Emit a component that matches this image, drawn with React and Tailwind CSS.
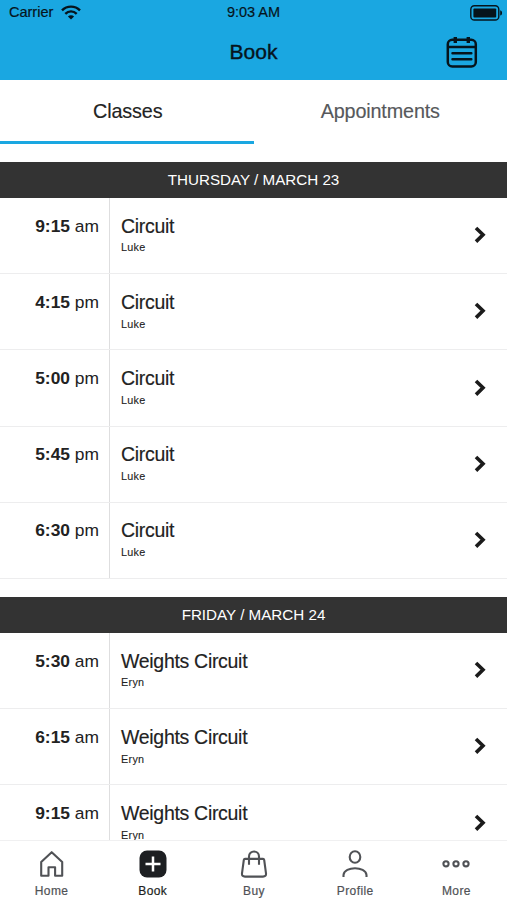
import React from 'react';

const days = [
    {
        label: 'THURSDAY / MARCH 23',
        classes: [
            { time: '9:15', period: 'am', name: 'Circuit', coach: 'Luke' },
            { time: '4:15', period: 'pm', name: 'Circuit', coach: 'Luke' },
            { time: '5:00', period: 'pm', name: 'Circuit', coach: 'Luke' },
            { time: '5:45', period: 'pm', name: 'Circuit', coach: 'Luke' },
            { time: '6:30', period: 'pm', name: 'Circuit', coach: 'Luke' },
        ],
    },
    {
        label: 'FRIDAY / MARCH 24',
        classes: [
            { time: '5:30', period: 'am', name: 'Weights Circuit', coach: 'Eryn' },
            { time: '6:15', period: 'am', name: 'Weights Circuit', coach: 'Eryn' },
            { time: '9:15', period: 'am', name: 'Weights Circuit', coach: 'Eryn' },
        ],
    },
];

const App = () => {
    return (
        <div className="h-[900px] w-full flex flex-col overflow-hidden bg-white text-[#222222] font-['Liberation_Sans',Arial,sans-serif]">
            <header className="h-20 shrink-0 bg-[#1aa7e1] text-[#06141c]">
                <div className="h-6 grid grid-cols-3 items-center pl-2 pr-1">
                    <div className="flex items-center gap-2 text-[14.5px] leading-6 [-webkit-text-stroke:0.2px]">
                        <span className="pl-px">Carrier</span>
                        <WifiIcon />
                    </div>
                    <span className="pr-1 text-center text-[14.5px] leading-[22px] [-webkit-text-stroke:0.2px]">9:03 AM</span>
                    <div className="flex justify-end pt-px">
                        <BatteryIcon />
                    </div>
                </div>
                <div className="h-14 grid grid-cols-3 items-center px-[29px]">
                    <h1 className="col-start-2 text-center text-[21px] leading-6 [-webkit-text-stroke:0.4px]">Book</h1>
                    <div className="flex justify-end">
                        <CalendarIcon />
                    </div>
                </div>
            </header>

            {/* Tabs */}
            <nav className="h-16 shrink-0 grid grid-cols-2 text-[19.8px] tracking-[-0.15px] [-webkit-text-stroke:0.15px]">
                <button className="border-b-[3px] border-[#1aa7e1] pt-0.5 pl-0.5">Classes</button>
                <button className="border-b-[3px] border-transparent pt-0.5 text-[#56585b]">Appointments</button>
            </nav>

            {/* Schedule */}
            <main className="flex-1 min-h-0 overflow-hidden flex flex-col gap-[18px] pt-[18px]">
                {days.map((day) => (
                    <section key={day.label} className="shrink-0">
                        <h2 className="h-9 bg-[#333333] text-center text-[15.2px] leading-9 text-white">{day.label}</h2>
                        {day.classes.map((item) => (
                            <ClassRow key={item.time} item={item} />
                        ))}
                    </section>
                ))}
            </main>

            <footer className="h-[60px] shrink-0 grid grid-cols-5 border-t border-[#f0f0f1] bg-white pl-px">
                <NavItem label="Home" icon={<HomeIcon />} />
                <NavItem label="Book" icon={<BookIcon />} active />
                <NavItem label="Buy" icon={<BagIcon />} />
                <NavItem label="Profile" icon={<ProfileIcon />} />
                <NavItem label="More" icon={<MoreIcon />} />
            </footer>
        </div>
    );
};

const ClassRow = ({ item }) => (
    <div className="h-[76.2px] flex border-b border-[#ededee]">
        <div className="w-[110px] shrink-0 border-r border-[#dededf] pt-[15.6px] pr-2.5 text-right text-[17.4px] leading-6">
            <b>{item.time}</b> {item.period}
        </div>
        <div className="flex-1 pt-[15.6px] pl-[11px]">
            <p className="text-[19.5px] leading-6 tracking-[-0.3px] [-webkit-text-stroke:0.15px]">{item.name}</p>
            <p className="pt-[2.8px] text-[10.8px] leading-[14px] tracking-[0.3px] [-webkit-text-stroke:0.1px]">{item.coach}</p>
        </div>
        <div className="pt-[28.2px] pr-5">
            <svg width="14" height="18" viewBox="0 0 14 18" fill="none" stroke="#1b1b1b" strokeWidth="3.6">
                <path d="M3 2 L10 8.8 L3 15.6" />
            </svg>
        </div>
    </div>
);

const NavItem = ({ label, icon, active }) => (
    <button className={`flex flex-col items-center pt-2 ${active ? 'text-[#1d1f22]' : 'text-[#505256]'}`}>
        {icon}
        <span className="mt-[5px] text-[12px] leading-[15px] tracking-[0.4px] [-webkit-text-stroke:0.2px]">{label}</span>
    </button>
);

const WifiIcon = () => (
    <svg width="20" height="15" viewBox="0 0 20 15" fill="none" stroke="currentColor" strokeWidth="2.4">
        <path d="M1 5.4 C6 0.3 14 0.3 19 5.4" />
        <path d="M4.3 8.8 C7.6 5.6 12.4 5.6 15.7 8.8" />
        <path d="M10 14.6 L6.9 11.5 C8.7 9.8 11.3 9.8 13.1 11.5 Z" fill="currentColor" stroke="none" />
    </svg>
);

const BatteryIcon = () => (
    <svg width="33" height="16" viewBox="0 0 33 16" fill="none">
        <rect x="0.8" y="0.8" width="28" height="14.2" rx="3.6" stroke="currentColor" strokeWidth="1.4" />
        <rect x="3.4" y="3.4" width="22.8" height="9" rx="1" fill="currentColor" />
        <path d="M30.2 5.2 C32.7 5.8 32.7 10 30.2 10.6 Z" fill="currentColor" />
    </svg>
);

const CalendarIcon = () => (
    <svg width="32" height="32" viewBox="0 0 32 32" fill="none" stroke="currentColor" strokeWidth="2.5">
        <rect x="1.8" y="3.8" width="28" height="26.6" rx="4.5" />
        <path d="M1.8 11 H29.8" />
        <path d="M6.5 17.2 H25.3 M6.5 23.2 H25.3" strokeLinecap="round" />
        <path d="M9.3 1 V7 M22.3 1 V7" strokeWidth="3.4" />
    </svg>
);

const HomeIcon = () => (
    <svg width="28" height="30" viewBox="0 0 28 30" fill="none" stroke="currentColor" strokeWidth="2.1">
        <path d="M3.2 13 L13.7 3.2 L24.2 13 V26.7 H17.1 V18.3 H10.5 V26.7 H3.2 Z" strokeLinejoin="round" />
    </svg>
);

const BookIcon = () => (
    <svg width="28" height="30" viewBox="0 0 28 30" fill="none">
        <rect x="0.5" y="1.5" width="27" height="27" rx="7.5" fill="currentColor" />
        <path d="M14 7.5 V22.5 M6.5 15 H21.5" stroke="white" strokeWidth="2.5" />
    </svg>
);

const BagIcon = () => (
    <svg width="28" height="30" viewBox="0 0 28 30" fill="none" stroke="currentColor" strokeWidth="2.1">
        <path d="M5 9.9 H23 Q24 9.9 24.2 11 L26 24.4 Q26.3 27.6 23 27.6 H5 Q1.7 27.6 2 24.4 L3.8 11 Q4 9.9 5 9.9 Z" />
        <path d="M9 15.8 V7.5 C9 0.8 19 0.8 19 7.5 V15.8" />
    </svg>
);

const ProfileIcon = () => (
    <svg width="28" height="30" viewBox="0 0 28 30" fill="none" stroke="currentColor" strokeWidth="2.1">
        <ellipse cx="14" cy="8" rx="5.3" ry="5.8" />
        <path d="M2.5 28 V26 C3.5 17 24.5 17 25.5 26 V28" />
    </svg>
);

const MoreIcon = () => (
    <svg width="28" height="30" viewBox="0 0 28 30" fill="none" stroke="currentColor" strokeWidth="2.1">
        <circle cx="4" cy="14.8" r="2.6" />
        <circle cx="14" cy="14.8" r="2.6" />
        <circle cx="24" cy="14.8" r="2.6" />
    </svg>
);

export default App;
